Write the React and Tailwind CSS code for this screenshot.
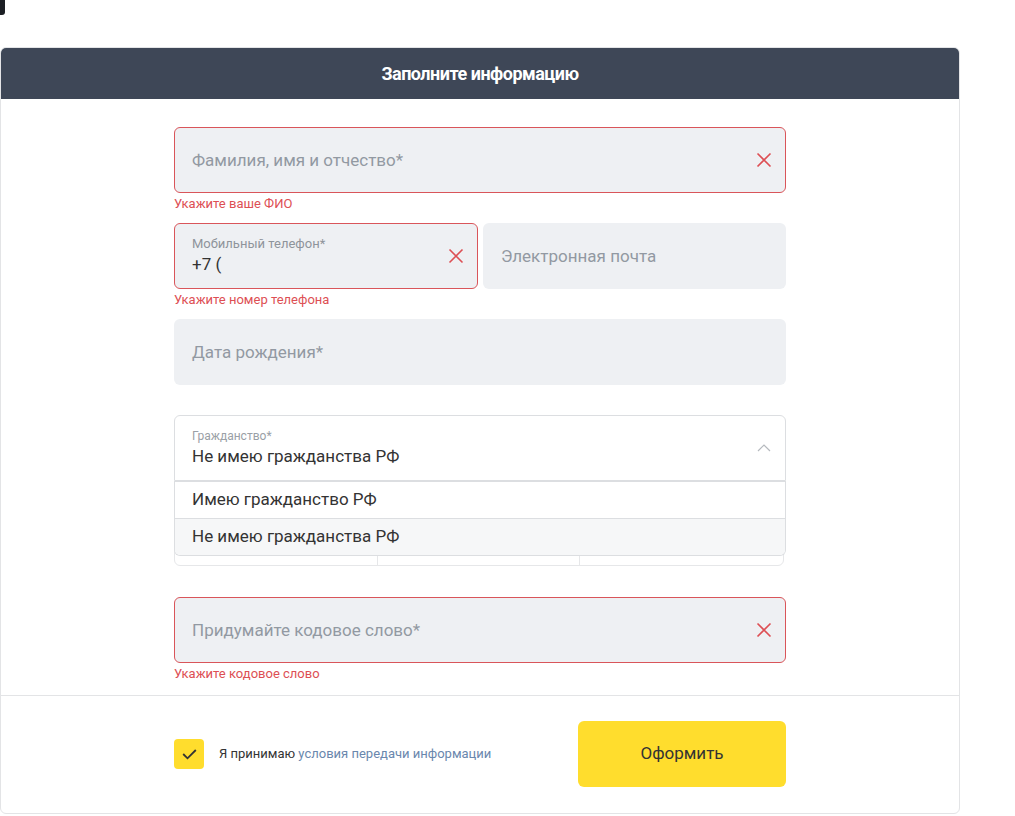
import React from "react";

const XIcon = () => (
  <svg width="16" height="16" viewBox="0 0 16 16" fill="none">
    <path d="M1.5 1.5L14.5 14.5M14.5 1.5L1.5 14.5" stroke="#dd4f54" strokeWidth="1.6" />
  </svg>
);

const ErrorText = ({ children }) => (
  <div className="h-[30px] text-[13px] leading-[22px] text-[#dd4f54]">{children}</div>
);

const Field = ({ placeholder, error, className = "" }) => (
  <div className={`h-[66px] rounded-[6px] bg-[#eef0f3] flex items-center justify-between pl-[17px] pr-[13px] ${error ? "border border-[#d9555a]" : "border border-transparent"} ${className}`}>
    <span className="text-[17px] text-[#9299a2] pt-[2px]">{placeholder}</span>
    {error && <XIcon />}
  </div>
);

export default function App() {
  return (
    <div className="relative min-h-[816px] bg-white" style={{ fontFamily: "Roboto, 'Noto Sans', sans-serif" }}>
      <div className="absolute left-0 top-0 w-[5px] h-[15px] bg-[#1c1f24] rounded-br-[3px]" />
      <div className="pt-[47px] w-[960px]">
        <div className="rounded-[6px] border border-[#e3e4e6] overflow-hidden">
          <div className="-mt-px -mx-px h-[52px] bg-[#3e4757] flex items-center justify-center">
            <span className="text-white text-[18px] font-bold tracking-[-0.5px]">Заполните информацию</span>
          </div>
          <div className="pt-[28px] pb-[2px] flex flex-col items-center">
            <div className="w-[612px]">
              <Field placeholder="Фамилия, имя и отчество*" error />
              <ErrorText>Укажите ваше ФИО</ErrorText>

              <div className="flex gap-[5px]">
                <div className="w-[304px]">
                  <div className="h-[66px] rounded-[6px] bg-[#eef0f3] border border-[#d9555a] flex items-center justify-between pl-[17px] pr-[13px]">
                    <div className="flex flex-col">
                      <span className="text-[13px] leading-[16px] text-[#8e949b]">Мобильный телефон*</span>
                      <span className="text-[17px] leading-[24px] text-[#333]">+7 (</span>
                    </div>
                    <XIcon />
                  </div>
                  <ErrorText>Укажите номер телефона</ErrorText>
                </div>
                <div className="flex-1">
                  <Field placeholder="Электронная почта" />
                </div>
              </div>

              <Field placeholder="Дата рождения*" />
              <div className="h-[30px]" />

              <div className="relative">
                <div className="h-[66px] rounded-t-[6px] border border-[#dcdee1] bg-white flex items-center justify-between pl-[17px] pr-[14px]">
                  <div className="flex flex-col">
                    <span className="text-[12px] leading-[16px] text-[#9aa0a6]">Гражданство*</span>
                    <span className="text-[17px] leading-[24px] text-[#333]">Не имею гражданства РФ</span>
                  </div>
                  <svg width="14" height="8" viewBox="0 0 14 8" fill="none">
                    <path d="M1 7L7 1L13 7" stroke="#b5b9be" strokeWidth="1.2" />
                  </svg>
                </div>
                <div className="absolute left-0 right-0 top-full z-10 border border-t-0 border-[#dcdee1] rounded-b-[6px] bg-white overflow-hidden">
                  <div className="h-[37px] flex items-center pl-[17px] text-[17px] text-[#333] border-t border-[#dcdee1]">Имею гражданство РФ</div>
                  <div className="h-[37px] flex items-center pl-[17px] text-[17px] text-[#333] bg-[#f6f7f8] border-t border-[#dcdee1]">Не имею гражданства РФ</div>
                </div>
              </div>
              <div className="mt-[19px] h-[66px] w-[610px] grid grid-cols-3 border border-[#e6e7e9] rounded-b-[6px]">
                <div className="border-r border-[#e6e7e9]" />
                <div className="border-r border-[#e6e7e9]" />
                <div />
              </div>
              <div className="h-[31px]" />

              <Field placeholder="Придумайте кодовое слово*" error />
              <ErrorText>Укажите кодовое слово</ErrorText>
            </div>
          </div>
          <div className="border-t border-[#e3e4e6] h-[118px] pt-[25px] flex justify-center">
            <div className="w-[612px] h-[66px] flex items-center justify-between">
              <div className="flex items-center gap-[15px]">
                <div className="w-[30px] h-[30px] rounded-[4px] bg-[#ffdd2d] flex items-center justify-center">
                  <svg width="15" height="11" viewBox="0 0 15 11" fill="none">
                    <path d="M1.2 5L5.5 9.3L13.8 1" stroke="#333" strokeWidth="1.8" />
                  </svg>
                </div>
                <span className="text-[13px] text-[#333]">
                  Я принимаю <span className="text-[#6a87ad]">условия передачи информации</span>
                </span>
              </div>
              <button className="w-[208px] h-[66px] rounded-[6px] bg-[#ffdd2d] text-[17px] text-[#333]">Оформить</button>
            </div>
          </div>
        </div>
      </div>
    </div>
  );
}
